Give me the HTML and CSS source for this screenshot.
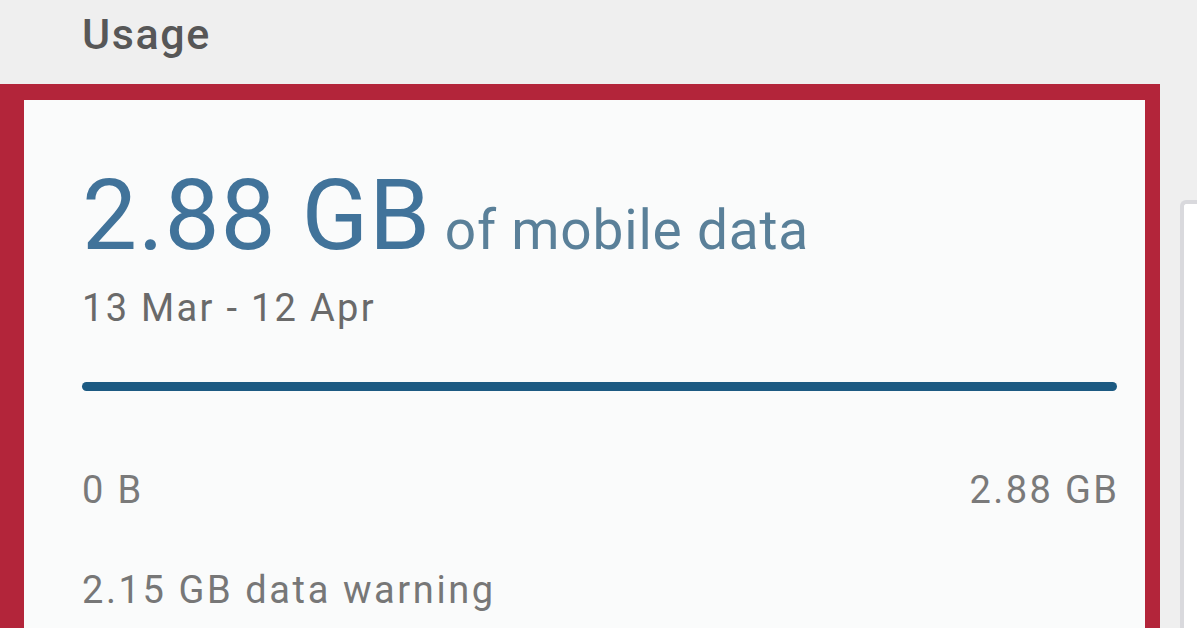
FILE: index.html
```html
<!DOCTYPE html>
<html>
<head>
<meta charset="utf-8">
<link rel="stylesheet" href="styles.css">
</head>
<body>
<div class="page">
  <div class="header">Usage</div>
  <div class="row">
    <div class="frame">
      <div class="total">
        <span class="amount">2.88 GB</span>
        <span class="unit">of mobile data</span>
      </div>
      <div class="period">13 Mar - 12 Apr</div>
      <div class="bar"></div>
      <div class="scale">
        <span>0 B</span>
        <span>2.88 GB</span>
      </div>
      <div class="warning">2.15 GB data warning</div>
    </div>
    <div class="side"></div>
  </div>
</div>
</body>
</html>
```

FILE: styles.css
```css
html, body {
  margin: 0;
  padding: 0;
}
body {
  background: #efefef;
  font-family: Roboto, "Liberation Sans", sans-serif;
  width: 1197px;
  height: 628px;
  overflow: hidden;
}
.page {
  display: flex;
  flex-direction: column;
}
.header {
  height: 84px;
  box-sizing: border-box;
  padding-left: 82px;
  padding-top: 13px;
  font-size: 43px;
  line-height: 1;
  font-weight: 500;
  letter-spacing: 1.6px;
  color: #575757;
}
.row {
  display: flex;
  gap: 20px;
}
.frame {
  width: 1160px;
  height: 544px;
  box-sizing: border-box;
  border-style: solid;
  border-color: #b3253a;
  border-width: 16px 15px 0 24px;
  background: #fafbfb;
  padding: 67px 28px 0 58px;
  display: flex;
  flex-direction: column;
}
.total {
  display: flex;
  align-items: baseline;
  gap: 14px;
  line-height: 1;
}
.amount {
  font-size: 98px;
  letter-spacing: 0.8px;
  color: #41739a;
}
.unit {
  font-size: 55px;
  letter-spacing: 0.8px;
  color: #5a8099;
}
.period {
  margin-top: 24px;
  font-size: 38px;
  line-height: 1;
  letter-spacing: 2.3px;
  color: #6a6a6a;
}
.bar {
  margin-top: 55px;
  height: 9px;
  border-radius: 5px;
  background: #1c5a82;
}
.scale {
  margin-top: 80px;
  display: flex;
  justify-content: space-between;
  font-size: 38px;
  line-height: 1;
  letter-spacing: 2.4px;
  color: #7a7a7a;
}
.scale span:last-child {
  margin-right: -2.4px;
}
.warning {
  margin-top: 62px;
  font-size: 38px;
  line-height: 1;
  letter-spacing: 2.6px;
  color: #777777;
}
.side {
  flex: 1;
  margin-top: 116px;
  height: 428px;
  background: #ffffff;
  border-left: 4px solid #d9d9dd;
  border-top: 4px solid #d9d9dd;
  border-top-left-radius: 6px;
}
```
